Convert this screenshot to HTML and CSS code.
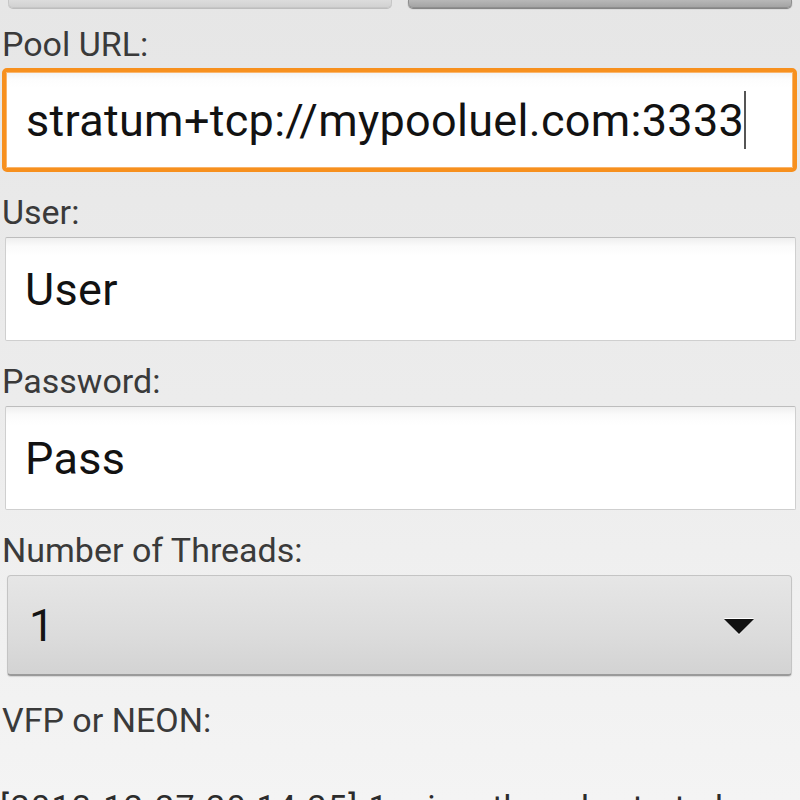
FILE: index.html
```html
<!DOCTYPE html>
<html>
<head>
<meta charset="utf-8">
<title>Miner settings</title>
<link rel="stylesheet" href="styles.css">
</head>
<body>
<div class="screen">
  <div class="btnrow">
    <div class="btn btn-light"></div>
    <div class="btn btn-dark"></div>
  </div>

  <div class="label first">Pool URL:</div>
  <div class="input focused"><span class="value">stratum+tcp://mypooluel.com:3333</span><span class="caret"></span></div>

  <div class="label">User:</div>
  <div class="input"><span class="value">User</span></div>

  <div class="label">Password:</div>
  <div class="input"><span class="value">Pass</span></div>

  <div class="label">Number of Threads:</div>
  <div class="spinner">
    <span class="value">1</span>
    <svg class="arrow" width="32" height="20" viewBox="0 0 32 20">
      <polygon points="1,2 31,2 16,19" fill="#ffffff"/>
      <polygon points="1,3 31,3 16,18" fill="#111111"/>
    </svg>
  </div>

  <div class="label vfp">VFP or NEON:</div>

  <div class="log"><span class="stamp">[2013-12-27 20:14:25] 1</span> miner threads started</div>
</div>
</body>
</html>
```

FILE: styles.css
```css
html, body {
  margin: 0;
  padding: 0;
}
body {
  width: 800px;
  height: 800px;
  overflow: hidden;
  background: linear-gradient(180deg, #e6e6e6 0%, #ececec 50%, #f4f4f4 100%);
  font-family: Roboto, "Noto Sans", sans-serif;
}
.screen {
  display: flex;
  flex-direction: column;
  height: 800px;
}
.screen > * {
  flex-shrink: 0;
}
.btnrow {
  display: flex;
  gap: 16px;
  height: 8px;
  padding: 0 8px 0 8px;
}
.btn {
  flex: 1;
  height: 7px;
  border-radius: 0 0 5px 5px;
}
.btn-light {
  background: linear-gradient(180deg, #dcdcdc, #d2d2d2);
  border: 1px solid #c6c6c6;
  border-top: none;
  box-shadow: 0 1px 0 #bdbdbd;
}
.btn-dark {
  background: linear-gradient(180deg, #b8b8b8, #a4a4a4);
  border: 1px solid #8e8e8e;
  border-top: none;
  box-shadow: 0 1px 1px #7a7a7a;
}
.label {
  font-size: 34px;
  line-height: 40px;
  height: 40px;
  color: #3a3a3a;
  padding-left: 2px;
  margin-top: 20px;
  margin-bottom: 5px;
  white-space: nowrap;
}
.label.first {
  margin-top: 16px;
  margin-bottom: 4px;
}
.input {
  display: flex;
  align-items: center;
  height: 102px;
  margin: 0 4px 0 5px;
  padding-left: 19px;
  background: linear-gradient(180deg, #efefef 0px, #fbfbfb 8px, #ffffff 18px);
  border: 1px solid #cfcfcf;
  border-top-color: #bdbdbd;
  border-radius: 2px;
  font-size: 45px;
  color: #121212;
}
.input.focused {
  height: 96px;
  margin: 0 3px 0 2px;
  padding-left: 20px;
  border: 4px solid #f7901e;
  border-radius: 5px;
  background: linear-gradient(180deg, #f2f2f2 0px, #fdfdfd 8px, #ffffff 16px);
  box-shadow: inset 0 0 0 1px #f9b46a;
}
.value {
  white-space: nowrap;
  line-height: 53px;
  letter-spacing: 0.3px;
}
.caret {
  width: 2px;
  height: 58px;
  background: #555;
  margin-left: 0px;
}
.spinner {
  display: flex;
  align-items: center;
  justify-content: space-between;
  height: 98px;
  margin: 0 8px 0 7px;
  padding: 0 36px 0 21px;
  background: linear-gradient(180deg, #e6e6e6 0%, #dcdcdc 60%, #d3d3d3 100%);
  border: 1px solid #c4c4c4;
  border-bottom: 2px solid #9a9a9a;
  border-radius: 4px;
  box-shadow: 0 1px 1px rgba(0,0,0,0.12);
  font-size: 45px;
  color: #141414;
}
.arrow {
  display: block;
  margin-top: 1px;
}
.label.vfp {
  margin-top: 24px;
}
.log {
  margin-top: 42px;
  font-size: 34px;
  line-height: 40px;
  color: #2c2c2c;
  white-space: nowrap;
  padding-left: 0;
}
.stamp {
  letter-spacing: 1.4px;
}
```
